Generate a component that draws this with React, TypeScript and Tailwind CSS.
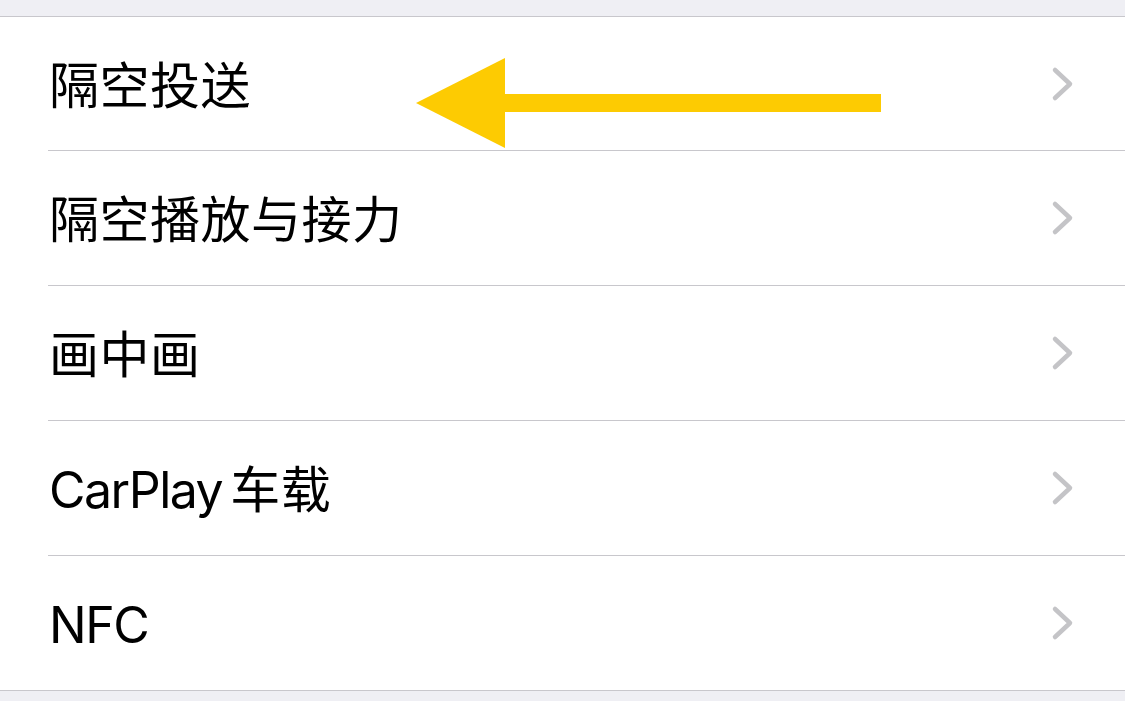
import React from "react";

type Item = { latin?: string; cjk?: string };

const items: Item[] = [
  { cjk: "隔空投送" },
  { cjk: "隔空播放与接力" },
  { cjk: "画中画" },
  { latin: "CarPlay", cjk: "车载" },
  { latin: "NFC" },
];

const Chevron = () => (
  <svg width="24" height="36" viewBox="0 0 24 36" fill="none">
    <polyline
      points="4,4 19,18 4,32"
      stroke="#c4c4c7"
      strokeWidth="4.5"
      strokeLinecap="round"
      strokeLinejoin="round"
    />
  </svg>
);

const Row = ({ item, first, last }: { item: Item; first: boolean; last: boolean }) => (
  <div className="pl-[48px]">
    <div
      className={
        "flex items-center justify-between pr-[50px] " +
        (first || last ? "h-[134px] " : "h-[135px] ") +
        (last ? "" : "border-b border-[#c8c7cc]")
      }
    >
      <span className="flex items-baseline pl-[1px] pt-[4px] text-[50px] leading-none text-black">
        {item.latin && <span className="tracking-[-1.5px]">{item.latin}</span>}
        {item.cjk && (
          <span className={"tracking-[0.5px] " + (item.latin ? "ml-[8px]" : "")}>{item.cjk}</span>
        )}
      </span>
      <Chevron />
    </div>
  </div>
);

export default function App() {
  return (
    <div
      className="w-[1125px] h-[701px] bg-[#efeff4] overflow-hidden"
      style={{ fontFamily: 'Inter, "Noto Sans CJK SC", sans-serif' }}
    >
      <div className="h-[16px]" />
      <div className="relative bg-white border-y border-[#c8c7cc]">
        {items.map((item, i) => (
          <Row key={i} item={item} first={i === 0} last={i === items.length - 1} />
        ))}
        <svg
          className="absolute left-[416px] top-[41px]"
          width="466"
          height="90"
          viewBox="0 0 466 90"
        >
          <polygon points="0,45 89,0 89,90" fill="#fdcb02" />
          <rect x="88" y="36" width="377" height="18" fill="#fdcb02" />
        </svg>
      </div>
    </div>
  );
}
